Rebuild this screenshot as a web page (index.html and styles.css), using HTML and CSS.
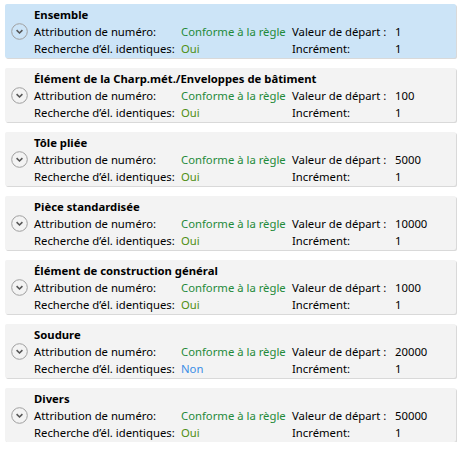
FILE: index.html
```html
<!DOCTYPE html>
<html lang="fr">
<head>
<meta charset="utf-8">
<link rel="stylesheet" href="styles.css">
</head>
<body>
<div class="list">
  <div class="card selected">
    <div class="icon"><svg width="17" height="17" viewBox="0 0 17 17"><circle cx="8.5" cy="8.5" r="7.8" fill="none" stroke="#a0a0a0" stroke-width="1"/><path d="M5.6 7.2 L8.5 10 L11.4 7.2" fill="none" stroke="#555" stroke-width="1.6"/></svg></div>
    <div class="body">
      <div class="title">Ensemble</div>
      <div class="grid">
        <span>Attribution de numéro:</span><span class="green">Conforme à la règle</span><span>Valeur de départ :</span><span>1</span>
        <span>Recherche d’él. identiques:</span><span class="olive">Oui</span><span>Incrément:</span><span>1</span>
      </div>
    </div>
  </div>
  <div class="card">
    <div class="icon"><svg width="17" height="17" viewBox="0 0 17 17"><circle cx="8.5" cy="8.5" r="7.8" fill="none" stroke="#a0a0a0" stroke-width="1"/><path d="M5.6 7.2 L8.5 10 L11.4 7.2" fill="none" stroke="#555" stroke-width="1.6"/></svg></div>
    <div class="body">
      <div class="title">Élément de la Charp.mét./Enveloppes de bâtiment</div>
      <div class="grid">
        <span>Attribution de numéro:</span><span class="green">Conforme à la règle</span><span>Valeur de départ :</span><span>100</span>
        <span>Recherche d’él. identiques:</span><span class="olive">Oui</span><span>Incrément:</span><span>1</span>
      </div>
    </div>
  </div>
  <div class="card">
    <div class="icon"><svg width="17" height="17" viewBox="0 0 17 17"><circle cx="8.5" cy="8.5" r="7.8" fill="none" stroke="#a0a0a0" stroke-width="1"/><path d="M5.6 7.2 L8.5 10 L11.4 7.2" fill="none" stroke="#555" stroke-width="1.6"/></svg></div>
    <div class="body">
      <div class="title">Tôle pliée</div>
      <div class="grid">
        <span>Attribution de numéro:</span><span class="green">Conforme à la règle</span><span>Valeur de départ :</span><span>5000</span>
        <span>Recherche d’él. identiques:</span><span class="olive">Oui</span><span>Incrément:</span><span>1</span>
      </div>
    </div>
  </div>
  <div class="card">
    <div class="icon"><svg width="17" height="17" viewBox="0 0 17 17"><circle cx="8.5" cy="8.5" r="7.8" fill="none" stroke="#a0a0a0" stroke-width="1"/><path d="M5.6 7.2 L8.5 10 L11.4 7.2" fill="none" stroke="#555" stroke-width="1.6"/></svg></div>
    <div class="body">
      <div class="title">Pièce standardisée</div>
      <div class="grid">
        <span>Attribution de numéro:</span><span class="green">Conforme à la règle</span><span>Valeur de départ :</span><span>10000</span>
        <span>Recherche d’él. identiques:</span><span class="olive">Oui</span><span>Incrément:</span><span>1</span>
      </div>
    </div>
  </div>
  <div class="card">
    <div class="icon"><svg width="17" height="17" viewBox="0 0 17 17"><circle cx="8.5" cy="8.5" r="7.8" fill="none" stroke="#a0a0a0" stroke-width="1"/><path d="M5.6 7.2 L8.5 10 L11.4 7.2" fill="none" stroke="#555" stroke-width="1.6"/></svg></div>
    <div class="body">
      <div class="title">Élément de construction général</div>
      <div class="grid">
        <span>Attribution de numéro:</span><span class="green">Conforme à la règle</span><span>Valeur de départ :</span><span>1000</span>
        <span>Recherche d’él. identiques:</span><span class="olive">Oui</span><span>Incrément:</span><span>1</span>
      </div>
    </div>
  </div>
  <div class="card">
    <div class="icon"><svg width="17" height="17" viewBox="0 0 17 17"><circle cx="8.5" cy="8.5" r="7.8" fill="none" stroke="#a0a0a0" stroke-width="1"/><path d="M5.6 7.2 L8.5 10 L11.4 7.2" fill="none" stroke="#555" stroke-width="1.6"/></svg></div>
    <div class="body">
      <div class="title">Soudure</div>
      <div class="grid">
        <span>Attribution de numéro:</span><span class="green">Conforme à la règle</span><span>Valeur de départ :</span><span>20000</span>
        <span>Recherche d’él. identiques:</span><span class="blue">Non</span><span>Incrément:</span><span>1</span>
      </div>
    </div>
  </div>
  <div class="card">
    <div class="icon"><svg width="17" height="17" viewBox="0 0 17 17"><circle cx="8.5" cy="8.5" r="7.8" fill="none" stroke="#a0a0a0" stroke-width="1"/><path d="M5.6 7.2 L8.5 10 L11.4 7.2" fill="none" stroke="#555" stroke-width="1.6"/></svg></div>
    <div class="body">
      <div class="title">Divers</div>
      <div class="grid">
        <span>Attribution de numéro:</span><span class="green">Conforme à la règle</span><span>Valeur de départ :</span><span>50000</span>
        <span>Recherche d’él. identiques:</span><span class="olive">Oui</span><span>Incrément:</span><span>1</span>
      </div>
    </div>
  </div>
</div>
</body>
</html>
```
FILE: styles.css
```css
html, body {
  margin: 0;
  padding: 0;
  background: #ffffff;
}
body {
  font-family: "Noto Sans", "Open Sans", sans-serif;
  font-size: 11.3px;
  color: #000;
}
.list {
  display: flex;
  flex-direction: column;
  gap: 10px;
  padding: 4px 0 0 5px;
  width: 451px;
}
.card {
  display: flex;
  height: 54px;
  background: #f3f3f3;
  box-shadow: 1px 1px 0 #d9d9d9;
  border-radius: 2px;
  box-sizing: border-box;
}
.card.selected {
  background: #cce4f7;
}
.icon {
  width: 29px;
  display: flex;
  justify-content: center;
  padding-top: 19px;
  box-sizing: border-box;
}
.icon svg {
  display: block;
}
.body {
  flex: 1;
  padding-top: 2px;
}
.title {
  font-weight: 700;
  line-height: 17px;
  height: 17px;
  white-space: nowrap;
}
.grid {
  display: grid;
  grid-template-columns: 147px 111px 103px auto;
  grid-auto-rows: 17px;
  line-height: 17px;
  white-space: nowrap;
}
.green { color: #1f8a3a; }
.olive { color: #4f8f12; }
.blue { color: #3a8ee6; }
```
